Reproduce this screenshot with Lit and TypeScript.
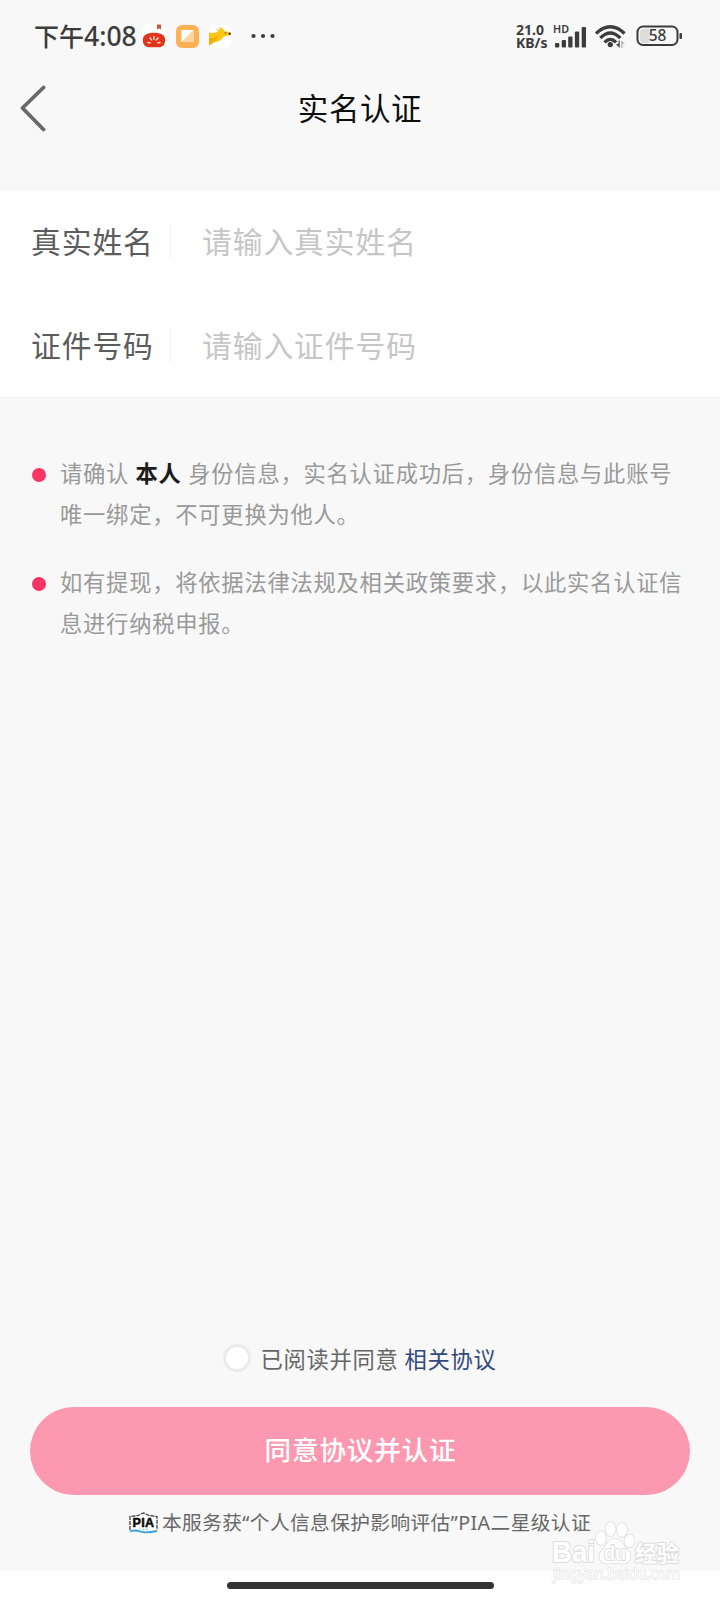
import { LitElement, html, css } from "lit";
import { customElement, property } from "lit/decorators.js";

@customElement("status-bar")
class StatusBar extends LitElement {
  static styles = css`
    :host { display: flex; height: 72px; padding: 0 37px 0 34px; align-items: center; justify-content: space-between; color: #3c3c3c; }
    .side { display: flex; align-items: center; }
    .time { font: 25px/34px "Noto Sans CJK SC", sans-serif; font-weight: 500; white-space: nowrap; width: 103px; display: flex; align-items: center; padding-bottom: 2px; }
    .digits { font: 26.500px/34px "Noto Sans", sans-serif; font-weight: 500; letter-spacing: 0; padding-top: 1px; }
    .app { margin-left: 10px; display: block; }
    .first { margin-left: 5px; }
    .more { margin-left: 18px; display: block; }
    .speed { display: flex; flex-direction: column; font: 700 14px/13px "Noto Sans", sans-serif; width: 37px; white-space: nowrap; }
    .signal { display: block; }
    .battery { display: block; }
  `;
  render() {
    return html`
      <div class="side">
        <div class="time">下午<span class="digits">4:08</span></div>
        <svg class="app first" width="24" height="24" viewBox="0 0 24 24">
          <rect width="24" height="24" rx="6" fill="#fff"/>
          <path d="M15 .5h4v5l-2-1.200L15 5.500z" fill="#d0543c"/>
          <path d="M.8 16C.8 11 5 8.700 12 8.700S23.200 11 23.200 16c0 5-3 7.300-6 7.300H7c-3 0-6.200-2.300-6.200-7.300z" fill="#df3518"/>
          <path d="M6 18.500l2.200.3M8 14l1.700 2M12 12.500v3M16 14l-1.700 2M18 18.500l-2.200.3" stroke="#ffe8dc" stroke-width="1.300" stroke-linecap="round"/>
        </svg>
        <svg class="app" width="23" height="23" viewBox="0 0 23 23">
          <rect width="23" height="23" rx="6" fill="#fcb254"/>
          <rect x="5" y="5" width="13" height="12" rx="1" fill="#fdd4a0"/>
          <path d="M5.500 5H17.500L5.500 17z" fill="#fff"/>
        </svg>
        <svg class="app" width="23" height="23" viewBox="0 0 23 23">
          <rect width="23" height="23" rx="6" fill="#fff"/>
          <path d="M0 7.500c4 1 7 .2 9.500-1.200L6.500 4.200l5 .6L9.500 2l3.500 1 3 3.200c3 .1 4.300.8 5.500 2l-1 2.200c-3 0-5 .3-6.500 2.200-2.200 3.300-4.500 4-8 4.300L0 20.500z" fill="#f9c812"/>
          <path d="M0 13c4 .5 7-.5 10-3l-3 5.500L0 20.500z" fill="#f3ae08"/>
          <circle cx="20.700" cy="8.800" r="1.200" fill="#333"/><circle cx="16.500" cy="8" r=".7" fill="#333"/>
        </svg>
        <svg class="more" width="26" height="6" viewBox="0 0 26 6" fill="#3c3c3c">
          <circle cx="3.500" cy="3" r="2.100"/><circle cx="13" cy="3" r="2.100"/><circle cx="22.500" cy="3" r="2.100"/>
        </svg>
      </div>
      <div class="side">
        <div class="speed"><span>21.0</span><span>KB/s</span></div>
        <svg class="signal" width="82" height="28" viewBox="0 0 82 28" fill="#3c3c3c">
          <text x="0" y="10.500" font-family="Noto Sans" font-size="10.500" font-weight="600" textLength="16" lengthAdjust="spacingAndGlyphs">HD</text>
          <rect x="2" y="21" width="4.300" height="4.500" rx="1"/><rect x="8.700" y="18" width="4.300" height="7.500" rx="1"/>
          <rect x="15.200" y="14.500" width="4.300" height="11" rx="1"/><rect x="21.900" y="9.500" width="4.300" height="16" rx="1"/>
          <rect x="28.700" y="5" width="4.300" height="20.500" rx="1"/>
          <g fill="none" stroke="#3c3c3c" stroke-width="3.200">
            <path d="M43 11.500q14.300-13.500 28.600 0"/><path d="M47.300 16q10-10 20 0"/><path d="M51.500 20.300q5.800-6 11.600 0"/>
          </g>
          <circle cx="57.300" cy="22.600" r="2.700"/>
          <path d="M63 22h2.500v-3.500h1.200V26z"/><path d="M72 21.800H69.500V26h-1.200V18.500z" fill="#aaa"/>
        </svg>
        <svg class="battery" width="48" height="22" viewBox="0 0 48 22">
          <path d="M9 3.800H14.500v14.500H9q-4 0-4-4v-6.500q0-4 4-4z" fill="#dcdcdc"/>
          <rect x="2.500" y="1.500" width="40" height="18.500" rx="5.500" fill="none" stroke="#3c3c3c" stroke-width="2"/>
          <rect x="44.500" y="8" width="2.500" height="6" rx="1" fill="#3c3c3c"/>
          <text x="22.500" y="16.300" text-anchor="middle" font-family="Noto Sans" font-size="15.500" font-weight="500" fill="#3c3c3c">58</text>
        </svg>
      </div>`;
  }
}

@customElement("form-row")
class FormRow extends LitElement {
  @property() label = "";
  @property() hint = "";
  static styles = css`
    :host { display: flex; align-items: center; height: 103px; padding-left: 31px; box-sizing: border-box; padding-bottom: 1px; font: 29.800px/44px "Noto Sans CJK SC", sans-serif; letter-spacing: 0.9px; }
    .label { width: 139px; color: #5c5c5c; padding-bottom: 5px; }
    .bar { width: 1px; height: 32px; background: #efefef; margin-right: 31px; }
    .hint { color: #c6c6c6; padding-bottom: 5px; }
  `;
  render() {
    return html`<div class="label">${this.label}</div><div class="bar"></div><div class="hint">${this.hint}</div>`;
  }
}

@customElement("app-root")
class AppRoot extends LitElement {
  static styles = css`
    :host { display: flex; flex-direction: column; position: relative; height: 1600px; background: #f8f8f8; font-family: "Noto Sans CJK SC", sans-serif; overflow: hidden; }
    .nav { display: grid; grid-template-columns: 60px 1fr 60px; align-items: center; height: 72px; margin-bottom: 47px; }
    .back { display: block; margin-left: 19px; }
    .title { text-align: center; font-size: 30.500px; line-height: 44px; letter-spacing: 0.6px; color: #0c0c0c; padding-bottom: 2px; }
    .form { background: #fff; border-bottom: 1px solid #f2f2f2; height: 206px; }
    .sep { height: 1px; background: #fcfcfc; }
    .notes { margin: 0; padding: 54px 0 0 32px; display: flex; flex-direction: column; gap: 28px; list-style: none; flex: 1; }
    .note { display: flex; font-size: 22.300px; line-height: 40.500px; letter-spacing: 0.75px; color: #999; white-space: nowrap; }
    .dot { flex: none; width: 14px; height: 14px; border-radius: 50%; background: #fb3464; margin: 16px 14px 0 0; }
    .strong { color: #1c1c1c; font-weight: 700; margin: 0 1px 0 0.5px; }
    .agree { display: flex; align-items: center; justify-content: center; height: 34px; font-size: 22.300px; line-height: 30px; letter-spacing: 0.7px; color: #666; margin-bottom: 32px; padding-right: 1px; }
    .agree span { padding-bottom: 1px; }
    .agree .check { width: 22px; height: 22px; padding: 0; border: 3px solid #ebebeb; border-radius: 50%; background: #fff; margin-right: 10px; }
    .link { color: #33497c; margin-left: 6px; }
    .submit { display: block; border: 0; height: 88px; margin: 0 30px; border-radius: 44px; background: #fc98b0; color: #fff; font: 500 26.600px/84px "Noto Sans CJK SC", sans-serif; letter-spacing: 0.8px; padding: 0 0 4px 1px; }
    .cert { display: flex; align-items: center; justify-content: center; height: 56px; color: #686868; font: 19.700px/30px "Noto Sans", "Noto Sans CJK SC", sans-serif; letter-spacing: 0.400px; margin-bottom: 20px; }
    .pia { margin-right: 4px; }
    .gesture { background: #fff; height: 29px; display: flex; justify-content: center; align-items: center; }
    .pill { width: 267px; height: 7px; border-radius: 4px; background: #333; }
    .mark { position: absolute; left: 546px; top: 1518px; }
  `;
  render() {
    return html`
      <status-bar></status-bar>
      <header class="nav">
        <svg class="back" width="28" height="48" viewBox="0 0 28 48" fill="none" stroke="#686868" stroke-width="3.800" stroke-linecap="round" stroke-linejoin="round"><path d="M24.500 3.500L3.500 24l21 21.500"/></svg>
        <div class="title">实名认证</div>
      </header>
      <section class="form">
        <form-row label="真实姓名" hint="请输入真实姓名"></form-row>
        <div class="sep"></div>
        <form-row label="证件号码" hint="请输入证件号码"></form-row>
      </section>
      <ul class="notes">
        <li class="note"><span class="dot"></span><div>请确认 <span class="strong">本人</span> 身份信息，实名认证成功后，身份信息与此账号<br>唯一绑定，不可更换为他人。</div></li>
        <li class="note"><span class="dot"></span><div>如有提现，将依据法律法规及相关政策要求，以此实名认证信<br>息进行纳税申报。</div></li>
      </ul>
      <div class="agree"><span class="check"></span><span>已阅读并同意</span><span class="link">相关协议</span></div>
      <button class="submit">同意协议并认证</button>
      <div class="cert">
        <svg class="pia" width="29" height="22" viewBox="0 0 29 22" fill="none">
          <path d="M1 18V4.500L9 3.500 14.500 1 20 3.500l8 1V18" fill="#fff" stroke="#333" stroke-width="1.200" stroke-dasharray="4 1"/>
          <text x="14.500" y="15" text-anchor="middle" font-family="Liberation Sans" font-weight="700" font-size="12.500" textLength="22" fill="#080808" stroke="#080808" stroke-width=".5">PIA</text>
          <path d="M1 19.500q5-2 10 0t17-.5" stroke="#35a3d8" stroke-width="1.800"/><path d="M10 17.500h9" stroke="#9bd2ec" stroke-width="1.300" stroke-dasharray="2 1.500"/>
        </svg>
        <span>本服务获“个人信息保护影响评估”PIA二星级认证</span>
      </div>
      <div class="gesture"><div class="pill"></div></div>
      <svg class="mark" width="145" height="70" viewBox="0 0 145 70" fill="#fff" stroke="#dcdcdc" stroke-width="2" stroke-linejoin="round" paint-order="stroke">
        <text x="6" y="44" font-family="Liberation Sans" font-weight="700" font-size="29" textLength="43" lengthAdjust="spacingAndGlyphs">Bai</text>
        <g stroke-width="1.500">
          <ellipse cx="55" cy="20" rx="5" ry="7"/><ellipse cx="64.500" cy="11" rx="5" ry="7"/><ellipse cx="76" cy="12" rx="5" ry="7"/><ellipse cx="83.500" cy="23" rx="5" ry="6.500"/>
          <path d="M69 21c6 0 8 6 12 10 6 6 4 14-3 14.500-4 .3-5-.5-9-.5s-5 .8-9 .5c-7-.5-9-8.500-3-14.500 4-4 6-10 12-10z"/>
        </g>
        <text x="58" y="42" font-family="Liberation Sans" font-weight="700" font-size="20" textLength="22" lengthAdjust="spacingAndGlyphs">du</text>
        <text x="89" y="43" font-family="Noto Sans CJK SC" font-weight="700" font-size="22">经验</text>
        <text x="7" y="61" font-family="Noto Sans" font-size="15" stroke="#e2e2e2" stroke-width="1.300" textLength="127" lengthAdjust="spacingAndGlyphs">jingyan.baidu.com</text>
      </svg>`;
  }
}
